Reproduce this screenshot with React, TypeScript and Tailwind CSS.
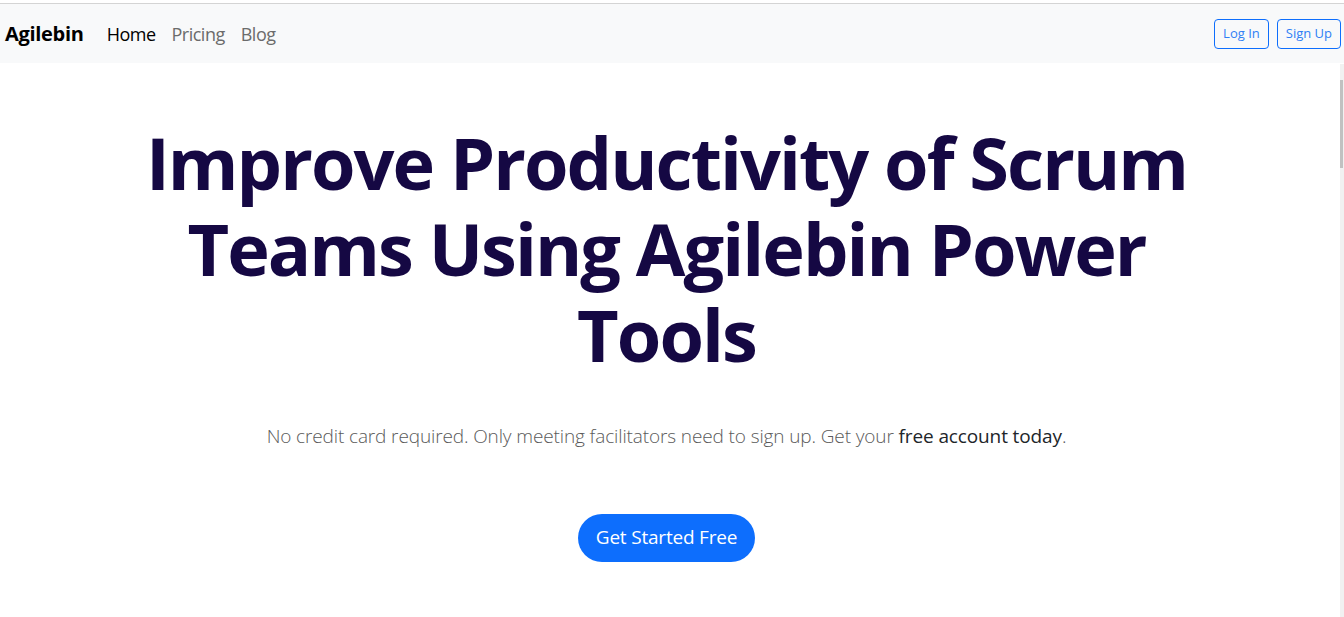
export default function App() {
  return (
    <div
      className="min-h-screen bg-white text-[#212529]"
      style={{ fontFamily: '"Open Sans", "Noto Sans", sans-serif' }}
    >
      {/* TOP LINE */}
      <div className="h-[4px] bg-white border-b border-[#d4d4d4]" />

      {/* NAVBAR */}
      <nav className="h-[59px] bg-[#f8f9fa] flex items-center justify-between pl-[5px] pr-[3px]">
        <div className="flex items-center">
          <a className="text-[20px] font-bold text-black tracking-[-0.3px] mr-[23px] mt-[1px]">Agilebin</a>
          <div className="flex items-center gap-[16px] text-[18px] tracking-[-0.5px] mt-[1px]">
            <a className="text-black">Home</a>
            <a className="text-[#6b6b6b]">Pricing</a>
            <a className="text-[#6b6b6b]">Blog</a>
          </div>
        </div>
        <div className="flex items-center gap-[8px] mt-[1px]">
          <button className="h-[30px] px-[8px] rounded-[4px] border border-[#0d6efd] text-[#2f7ff5] text-[13px]">
            Log In
          </button>
          <button className="h-[30px] px-[8px] rounded-[4px] border border-[#0d6efd] text-[#2f7ff5] text-[13px]">
            Sign Up
          </button>
        </div>
      </nav>

      {/* HERO */}
      <main className="pr-[11px]">
        <div className="max-w-[1140px] mx-auto px-3 flex flex-col items-center text-center">
          <h1 className="mt-[56px] text-[72px] leading-[86px] font-bold text-[#150843] tracking-[-1.95px]">
            Improve Productivity of Scrum Teams Using Agilebin Power Tools
          </h1>

          <p className="mt-[45px] text-[19px] font-light text-[#5a5a5a] tracking-[-0.12px]">
            No credit card required. Only meeting facilitators need to sign up. Get your{" "}
            <span className="font-normal text-[#212529]">free account today</span>.
          </p>

          <button className="mt-[63px] h-[48px] px-[18px] rounded-full bg-[#0d6efd] text-white text-[19px] tracking-[-0.2px]">
            Get Started Free
          </button>
        </div>
      </main>

      {/* SCROLLBAR */}
      <div className="fixed right-0 top-[64px] bottom-0 w-[4px] bg-[#f1f1f1]">
        <div className="mt-[16px] h-[88px] w-[3px] bg-[#c1c1c1]" />
      </div>
    </div>
  );
}
